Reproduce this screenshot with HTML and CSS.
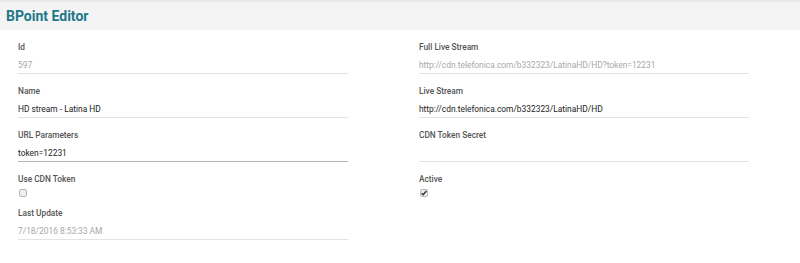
FILE: index.html
```html
<!DOCTYPE html>
<html lang="en">
<head>
    <meta charset="UTF-8">
    <meta name="viewport" content="width=device-width, initial-scale=1.0">
    <title>BPoint Editor</title>
    <link rel="stylesheet" href="styles.css">
</head>
<body>

    <div class="header">
        <h1>BPoint Editor</h1>
    </div>

    <div class="form">
        <div class="column">
            <div class="field">
                <label>Id</label>
                <div class="value muted">597</div>
            </div>
            <div class="field">
                <label>Name</label>
                <div class="value">HD stream - Latina HD</div>
            </div>
            <div class="field focused">
                <label>URL Parameters</label>
                <div class="value">token=12231</div>
            </div>
            <div class="check-field">
                <label>Use CDN Token</label>
                <span class="checkbox"></span>
            </div>
            <div class="field">
                <label>Last Update</label>
                <div class="value muted">7/18/2016 8:53:33 AM</div>
            </div>
        </div>

        <div class="column">
            <div class="field">
                <label>Full Live Stream</label>
                <div class="value muted">http://cdn.telefonica.com/b332323/LatinaHD/HD?token=12231</div>
            </div>
            <div class="field">
                <label>Live Stream</label>
                <div class="value">http://cdn.telefonica.com/b332323/LatinaHD/HD</div>
            </div>
            <div class="field">
                <label>CDN Token Secret</label>
                <div class="value"></div>
            </div>
            <div class="check-field">
                <label>Active</label>
                <span class="checkbox checked">
                    <svg width="8" height="8" viewBox="0 0 8 8"><path d="M1.6 4.2 L3.2 5.8 L6.4 2" fill="none" stroke="#333" stroke-width="1.4"/></svg>
                </span>
            </div>
        </div>
    </div>

</body>
</html>
```

FILE: styles.css
```css
body {
    margin: 0;
    font-family: Roboto, "Liberation Sans", sans-serif;
    background: #fff;
    color: #222;
}
.header {
    background-color: #f4f4f4;
    border-top: 2px solid #e8e8e8;
    height: 28px;
    padding-left: 6px;
}
.header h1 {
    margin: 0;
    font-size: 14px;
    font-weight: 700;
    line-height: 29px;
    color: #1d7889;
}
.form {
    display: grid;
    grid-template-columns: 1fr 1fr;
    padding-top: 11px;
}
.column {
    padding: 0 19px 0 18px;
}
.column + .column {
    padding-left: 19px;
}
.field {
    width: 330px;
    height: 44px;
}
label {
    display: block;
    font-size: 8.3px;
    font-weight: 500;
    color: #555;
    height: 12px;
    line-height: 12px;
}
.value {
    font-size: 8.4px;
    height: 15px;
    line-height: 15px;
    margin-top: 5px;
    border-bottom: 1px solid #e3e3e3;
}
.muted {
    color: #a8a8a8;
}
.focused .value {
    border-bottom-color: #b5b5b5;
}
.check-field {
    height: 34px;
}
.checkbox {
    display: block;
    box-sizing: border-box;
    width: 8px;
    height: 8px;
    margin: 4px 0 0 1px;
    border: 1px solid #b8b8b8;
    border-radius: 2px;
    background: #ededed;
}
.checkbox svg {
    display: block;
    margin: -1px;
}
```
